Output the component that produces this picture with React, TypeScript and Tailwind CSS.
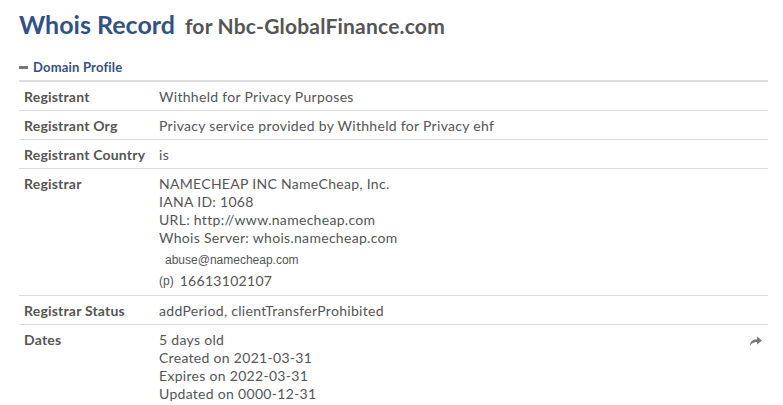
export default function App() {
  const rows: { label: string; lines: React.ReactNode }[] = [
    { label: "Registrant", lines: "Withheld for Privacy Purposes" },
    { label: "Registrant Org", lines: "Privacy service provided by Withheld for Privacy ehf" },
    { label: "Registrant Country", lines: "is" },
    {
      label: "Registrar",
      lines: (
        <>
          <div>NAMECHEAP INC NameCheap, Inc.</div>
          <div>IANA ID: 1068</div>
          <div>URL: http://www.namecheap.com</div>
          <div>Whois Server: whois.namecheap.com</div>
          <div className="mt-[4px] pl-[6px] text-[12px] leading-[18px] tracking-normal font-['Liberation_Sans',sans-serif]">abuse@namecheap.com</div>
          <div className="mt-[3px] mb-[1px] flex items-center gap-[6px]">
            <span className="text-[12px] tracking-normal font-['Liberation_Sans',sans-serif]">(p)</span>
            <span>16613102107</span>
          </div>
        </>
      ),
    },
    { label: "Registrar Status", lines: "addPeriod, clientTransferProhibited" },
    {
      label: "Dates",
      lines: (
        <>
          <div>5 days old</div>
          <div>Created on 2021-03-31</div>
          <div>Expires on 2022-03-31</div>
          <div>Updated on 0000-12-31</div>
        </>
      ),
    },
  ];

  return (
    <div className="w-[783px] h-[405px] overflow-hidden bg-white font-['Lato',sans-serif] px-[19px] pt-[8px]">
      <h1 className="flex items-baseline gap-[10px] leading-[32px]">
        <span className="text-[25px] font-bold text-[#325186]">Whois Record</span>
        <span className="text-[21px] font-bold text-[#555555] tracking-[0.2px]">for Nbc-GlobalFinance.com</span>
      </h1>
      <div className="mt-[17px] w-[749px]">
        <div className="flex items-center gap-[4px] pb-[5px] text-[13px] font-bold text-[#325186] leading-[16px] tracking-[0.2px]">
          <span className="inline-block w-[9px] h-[3px] bg-[#777777] mr-[1px]" />
          Domain Profile
        </div>
        <div className="h-[2px] bg-[#dddddd]" />
        {rows.map((r, i) => (
          <div
            key={r.label}
            className={`relative flex text-[14px] leading-[18px] text-[#555555] pt-[6px] pb-[4px] ${i < rows.length - 1 ? "border-b border-[#dddddd]" : ""}`}
          >
            <div className="w-[140px] pl-[5px] font-bold text-[#555555] tracking-[0.2px]">{r.label}</div>
            <div className="tracking-[0.3px]">{r.lines}</div>
            {r.label === "Dates" && (
              <svg className="absolute right-[5px] top-[10px]" width="14" height="12" viewBox="0 0 14 12">
                <path d="M1 11 C1 6 4 4.5 8 4.5 L8 1.5 L13 5.5 L8 9.5 L8 7 C5 7 2.5 8 1 11 Z" fill="#777777" />
              </svg>
            )}
          </div>
        ))}
      </div>
    </div>
  );
}
